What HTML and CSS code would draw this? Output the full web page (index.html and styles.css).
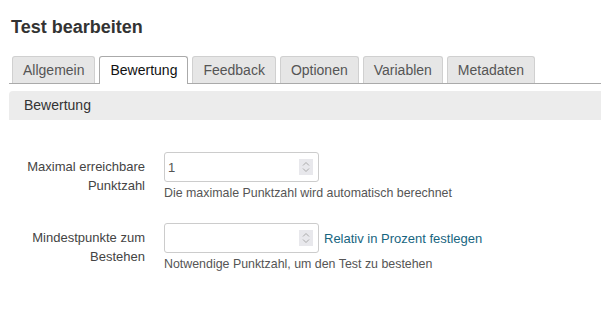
FILE: index.html
```html
<!DOCTYPE html>
<html lang="de">

<head>
  <meta charset="UTF-8">
  <title>Test bearbeiten</title>
  <link rel="stylesheet" href="styles.css">
</head>

<body>
  <div class="page">
    <h1 class="page-title">Test bearbeiten</h1>

    <ul class="tabs">
      <li class="tab">Allgemein</li>
      <li class="tab tab-active">Bewertung</li>
      <li class="tab">Feedback</li>
      <li class="tab">Optionen</li>
      <li class="tab">Variablen</li>
      <li class="tab">Metadaten</li>
    </ul>

    <div class="panel-header">Bewertung</div>

    <div class="form">
      <div class="form-row">
        <label class="form-label">Maximal erreichbare Punktzahl</label>
        <div class="form-field">
          <div class="field-line">
            <div class="num-input">
              <span class="num-value">1</span>
              <span class="spinner">
                <svg width="14" height="16" viewBox="0 0 14 16">
                  <path d="M4 6.5 L7 3.5 L10 6.5" fill="none" stroke="#aaa" stroke-width="1" />
                  <path d="M4 9.5 L7 12.5 L10 9.5" fill="none" stroke="#aaa" stroke-width="1" />
                </svg>
              </span>
            </div>
          </div>
          <div class="help-text">Die maximale Punktzahl wird automatisch berechnet</div>
        </div>
      </div>

      <div class="form-row">
        <label class="form-label">Mindestpunkte zum Bestehen</label>
        <div class="form-field">
          <div class="field-line">
            <div class="num-input">
              <span class="num-value"></span>
              <span class="spinner">
                <svg width="14" height="16" viewBox="0 0 14 16">
                  <path d="M4 6.5 L7 3.5 L10 6.5" fill="none" stroke="#aaa" stroke-width="1" />
                  <path d="M4 9.5 L7 12.5 L10 9.5" fill="none" stroke="#aaa" stroke-width="1" />
                </svg>
              </span>
            </div>
            <a class="field-link" href="#">Relativ in Prozent festlegen</a>
          </div>
          <div class="help-text">Notwendige Punktzahl, um den Test zu bestehen</div>
        </div>
      </div>
    </div>
  </div>
</body>

</html>
```

FILE: styles.css
```css
* {
  margin: 0;
  padding: 0;
  box-sizing: border-box;
}

body {
  font-family: 'Liberation Sans', Arial, sans-serif;
  background: #ffffff;
  color: #333;
  font-size: 13px;
}

.page {
  padding: 16px 0 0 9px;
}

.page-title {
  font-size: 18px;
  font-weight: 700;
  line-height: 22px;
  color: #333;
  margin-left: 2px;
  margin-bottom: 18px;
}

.tabs {
  list-style: none;
  display: flex;
  gap: 4px;
  padding-left: 3px;
  border-bottom: 1px solid #aaa;
  height: 28px;
}

.tab {
  height: 27px;
  padding: 0 10px;
  line-height: 26px;
  font-size: 14px;
  color: #555;
  background: #e6e6e6;
  border: 1px solid #d0d0d0;
  border-bottom: none;
  border-radius: 3px 3px 0 0;
}

.tab-active {
  height: 28px;
  background: #fff;
  color: #111;
  border-color: #aaa;
}

.panel-header {
  margin-top: 7px;
  height: 29px;
  line-height: 29px;
  padding-left: 15px;
  background: #ececec;
  border-radius: 4px 0 0 0;
  font-size: 14px;
  color: #333;
}

.form {
  padding-top: 32px;
}

.form-row {
  display: flex;
  margin-bottom: 22px;
}

.form-label {
  width: 136px;
  text-align: right;
  line-height: 19px;
  padding-top: 5px;
  color: #444;
}

.form-field {
  margin-left: 19px;
}

.field-line {
  display: flex;
  align-items: center;
}

.num-input {
  width: 155px;
  height: 30px;
  border: 1px solid #ccc;
  border-radius: 3px;
  display: flex;
  align-items: center;
  justify-content: space-between;
  padding: 0 5px 0 3px;
  color: #555;
}

.spinner {
  display: flex;
  width: 14px;
  height: 16px;
  background: #e8e8ec;
}

.field-link {
  margin-left: 5px;
  color: #17657f;
  text-decoration: none;
}

.help-text {
  margin-top: 3px;
  font-size: 12.4px;
  line-height: 16px;
  color: #555;
}
```
